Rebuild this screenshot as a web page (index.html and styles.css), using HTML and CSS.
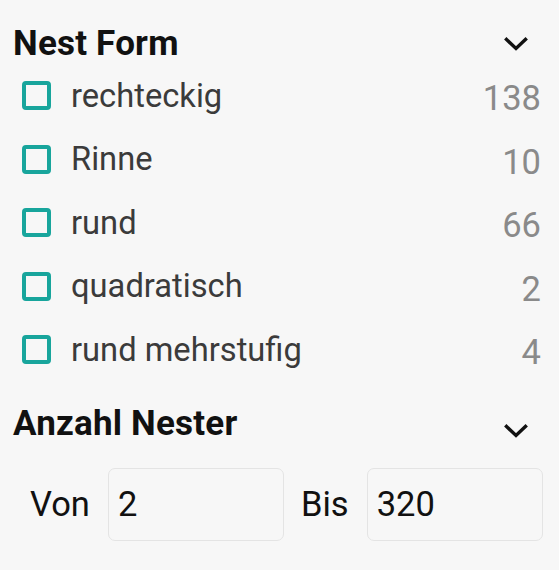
FILE: index.html
```html
<!DOCTYPE html>
<html lang="de">
<head>
<meta charset="utf-8">
<title>Filter</title>
<link rel="stylesheet" href="styles.css">
</head>
<body>
<div class="panel">
  <section class="filter">
    <div class="filter-head">
      <h2 class="filter-title">Nest Form</h2>
      <svg class="chevron" width="24" height="14" viewBox="0 0 24 14" aria-hidden="true"><polyline points="2.5,2.5 12,11.5 21.5,2.5" fill="none" stroke="#111" stroke-width="3.4" stroke-linecap="square"/></svg>
    </div>
    <ul class="options">
      <li class="option"><span class="box"></span><span class="label">rechteckig</span><span class="count">138</span></li>
      <li class="option"><span class="box"></span><span class="label">Rinne</span><span class="count">10</span></li>
      <li class="option"><span class="box"></span><span class="label">rund</span><span class="count">66</span></li>
      <li class="option"><span class="box"></span><span class="label">quadratisch</span><span class="count">2</span></li>
      <li class="option"><span class="box"></span><span class="label">rund mehrstufig</span><span class="count">4</span></li>
    </ul>
  </section>
  <section class="filter filter-range">
    <div class="filter-head">
      <h2 class="filter-title">Anzahl Nester</h2>
      <svg class="chevron chevron-low" width="24" height="14" viewBox="0 0 24 14" aria-hidden="true"><polyline points="2.5,2.5 12,11.5 21.5,2.5" fill="none" stroke="#111" stroke-width="3.4" stroke-linecap="square"/></svg>
    </div>
    <div class="range">
      <label class="range-label" for="von">Von</label>
      <input class="range-input" id="von" type="text" value="2">
      <label class="range-label" for="bis">Bis</label>
      <input class="range-input" id="bis" type="text" value="320">
    </div>
  </section>
</div>
</body>
</html>
```
FILE: styles.css
```css
html, body {
  margin: 0;
  padding: 0;
  background: #f7f7f7;
}
body {
  font-family: Roboto, "Liberation Sans", sans-serif;
  color: #3b3b3b;
}
.panel {
  padding: 24px 0 0 0;
  width: 559px;
  box-sizing: border-box;
}
.filter-head {
  display: flex;
  align-items: flex-start;
  justify-content: space-between;
  padding: 0 31px 0 13px;
}
.filter-title {
  margin: 0;
  font-size: 35px;
  line-height: 40px;
  font-weight: 700;
  letter-spacing: 0.2px;
  color: #111;
}
.chevron {
  display: block;
  margin-top: 13px;
}
.chevron-low {
  margin-top: 20px;
}
.options {
  list-style: none;
  margin: 0;
  padding: 0 18px 0 22px;
}
.option {
  display: flex;
  align-items: center;
  height: 63.5px;
}
.box {
  width: 29px;
  height: 29px;
  box-sizing: border-box;
  border: 4px solid #18a59c;
  border-radius: 4px;
  flex: none;
}
.label {
  margin-left: 20px;
  font-size: 32.7px;
  line-height: 40px;
  color: #3b3b3b;
  flex: 1;
}
.count {
  font-size: 34.5px;
  line-height: 40px;
  color: #8a8a8a;
  padding-top: 5px;
}
.filter-range {
  margin-top: 22px;
}
.range {
  display: flex;
  align-items: center;
  margin-top: 24px;
  padding-left: 30px;
}
.range-label {
  font-size: 34.5px;
  color: #111;
  margin-right: 18px;
}
.range-input {
  width: 176px;
  height: 73px;
  box-sizing: border-box;
  border: 1.5px solid #e4e4e4;
  border-radius: 7px;
  background: #f7f7f7;
  font-family: Roboto, "Liberation Sans", sans-serif;
  font-size: 34.5px;
  color: #111;
  padding: 0 0 0 9px;
  margin: 0 17px 0 0;
  outline: none;
}
```
